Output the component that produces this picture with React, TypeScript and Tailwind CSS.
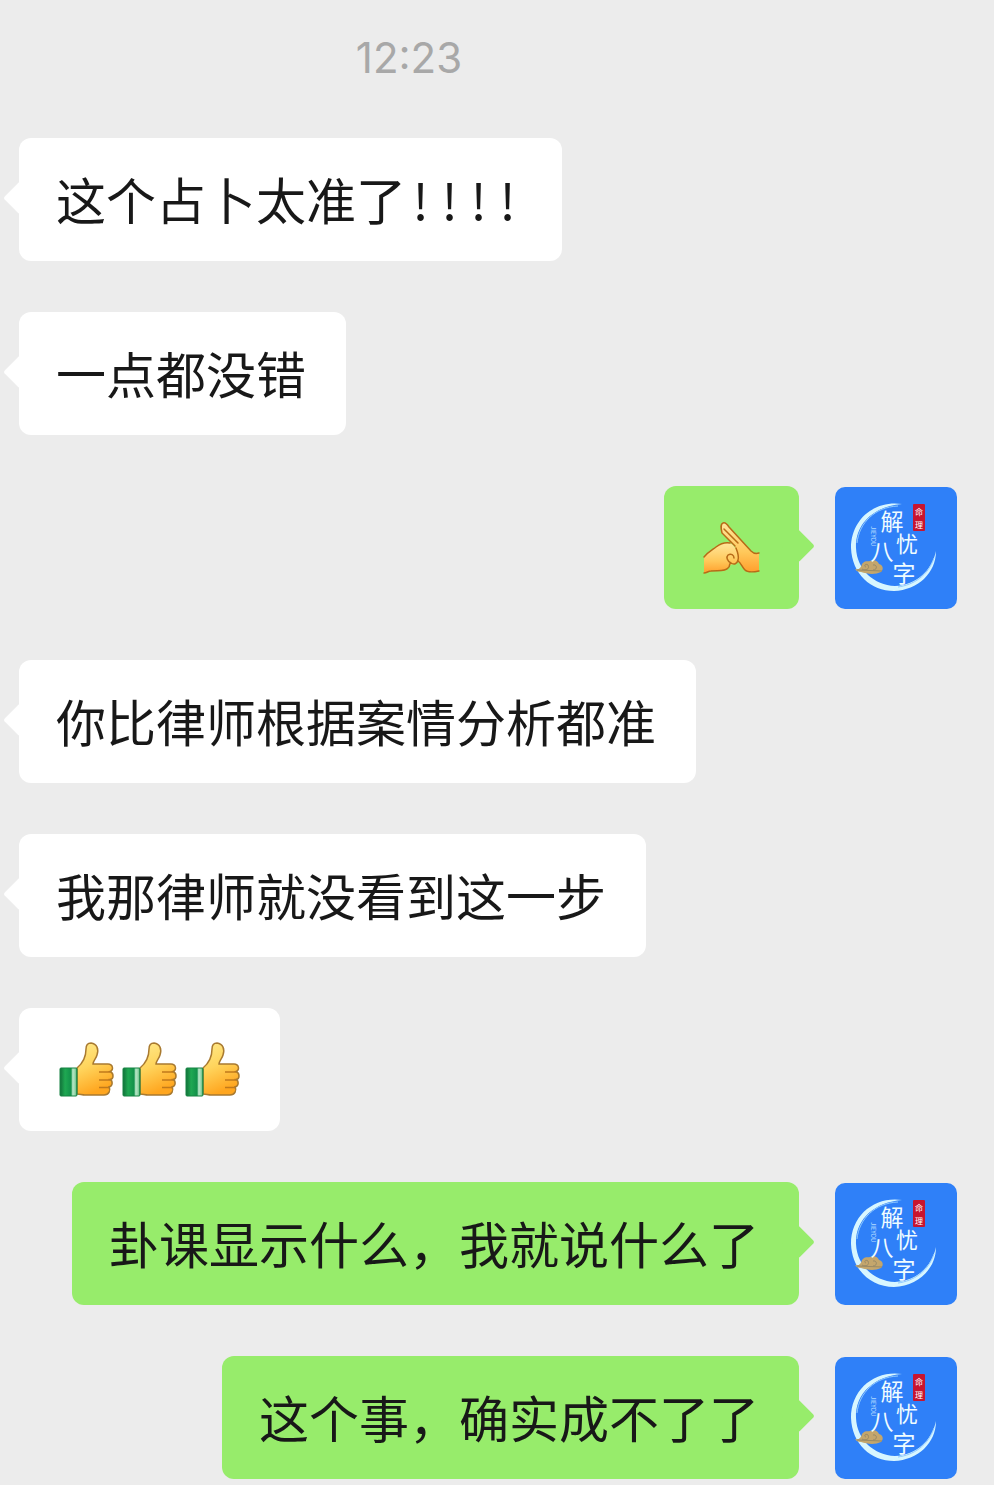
import type { ReactNode } from "react"

type Message = {
  id: number
  mine?: boolean
  content: ReactNode
  emoji?: boolean
}

function ThumbsUp() {
  return (
    <svg viewBox="0 0 63 56" className="h-14 w-[63px]" role="img" aria-label="赞">
      <defs>
        <linearGradient id="thumb-skin" x1="0" y1="0" x2="0.3" y2="1">
          <stop offset="0" stopColor="#ffe98a" />
          <stop offset="0.5" stopColor="#ffd45c" />
          <stop offset="1" stopColor="#ffa61f" />
        </linearGradient>
        <linearGradient id="thumb-cuff">
          <stop offset="0" stopColor="#12703a" />
          <stop offset="0.3" stopColor="#1fa852" />
          <stop offset="0.65" stopColor="#12914a" />
          <stop offset="0.75" stopColor="#b9e8c8" />
          <stop offset="0.9" stopColor="#8fd3a5" />
          <stop offset="1" stopColor="#1b9148" />
        </linearGradient>
      </defs>
      <path
        d="M22 26C28 21 31 15 31 7C31 2 33 1 36 1C42 2 44 7 42 13C41 17 38 19 38 22H53C58 22 59 28 55 29.500C59 31 59 37 55 37.500C58 39 58 44 54 45C56 48 54 53 49 53H30C27 53 25 52 22 52Z"
        fill="url(#thumb-skin)"
        stroke="#a97a30"
        strokeWidth="1.500"
      />
      <path d="M44 30H55M44 38H55M44 45.500H54" fill="none" stroke="#c17a1b" strokeWidth="1.500" />
      <rect x="5" y="26" width="17" height="28" rx="1" fill="url(#thumb-cuff)" stroke="#178343" />
    </svg>
  )
}

function FoldedFists() {
  return (
    <svg viewBox="0 0 63 56" className="h-14 w-[63px]" role="img" aria-label="抱拳">
      <defs>
        <linearGradient id="fist-skin" x1="0" y1="0" x2="0" y2="1">
          <stop offset="0" stopColor="#ffe79c" />
          <stop offset="0.6" stopColor="#ffc85a" />
          <stop offset="1" stopColor="#ff9f2d" />
        </linearGradient>
      </defs>
      <path
        d="M59 33C56 34 53 33 51 31L29 7C27 4 25 2 23 3C20 4 21 8 22 13L29 20L35 26L38 42C41 43 42 47 45 50C48 53 54 52 59 51Z"
        fill="url(#fist-skin)"
      />
      <path
        d="M59 33C56 34 53 33 51 31L29 7C27 4 25 2 23 3C20 4 21 8 22 13L29 20L35 26M24 9L38 23M59 51C54 52 48 53 45 50C42 47 41 43 38 41"
        fill="none"
        stroke="#b86b17"
        strokeWidth="1.500"
        strokeLinecap="round"
      />
      <path
        d="M4 37C8 32 12 30 16 27C20 24 25 22 30 23C34 25 37 30 38 36C39 41 37 44 34 44C31 44 30 45 29 46C27 50 24 51 21 51C17 51 14 50 11 51C8 51 7 53 4 53Z"
        fill="url(#fist-skin)"
      />
      <path
        d="M4 37C8 32 12 30 16 27C20 24 25 22 30 23M36 28C38 33 39 37 38 40C37 44 34 45 31 43C27 41 26 37 28 35C31 33 34 35 34 38M31 43C28 44 31 46 28 48C25 52 17 50 11 51C8 51 7 53 4 53"
        fill="none"
        stroke="#b86b17"
        strokeWidth="1.500"
        strokeLinecap="round"
      />
    </svg>
  )
}

function Avatar() {
  return (
    <svg
      viewBox="0 0 122 122"
      className="size-[122px] shrink-0 rounded-[10px] bg-[#2f80f8] font-['Noto_Sans_CJK_SC',sans-serif]"
      role="img"
      aria-label="解忧八字"
    >
      {/* Brush ring */}
      <path
        d="M67 17C40 13 16 32 16 61C17 87 36 104 59 104C83 103 101 86 101 64C97 83 82 98 60 99C39 98 22 83 21 61C20 36 40 19 67 17Z"
        fill="#d8f6ff"
      />
      <path d="M63 19C40 20 24 36 22 56M99 71C93 89 78 98 63 100" fill="none" stroke="#8fc9ff" />
      {/* Cloud */}
      <path
        d="M20 82C24 83 26 81 27 77C30 73 33 75 35 74C39 72 43 74 44 77C48 78 49 82 46 85C40 88 32 87 26 85C23 85 21 84 20 82Z"
        fill="#c4a66c"
      />
      <path
        d="M27 82C31 84 35 82 33 78C31 76 28 79 31 80M38 83C43 83 42 77 38 78M22 83L47 84"
        fill="none"
        stroke="#998a66"
      />
      <rect x="78" y="17" width="12" height="27" rx="1" fill="#c8142f" />
      <g fill="#fff" textAnchor="middle">
        <text x="84" y="28" fontSize="8">命</text>
        <text x="84" y="41" fontSize="8">理</text>
      </g>
      <g fill="#effcff" textAnchor="middle">
        <text x="57" y="43" fontSize="23">解</text>
        <text x="72" y="65" fontSize="22">忧</text>
        <text x="47" y="73" fontSize="23">八</text>
        <text x="69" y="95" fontSize="23">字</text>
      </g>
      <text transform="translate(36 39) rotate(90)" fontSize="6" fill="#b5dcff">JIEYOU</text>
    </svg>
  )
}

function Exclamations() {
  return (
    <span className="inline-flex">
      {[0, 1, 2, 3].map((i) => (
        <span key={i} className="w-[29px] text-center">!</span>
      ))}
    </span>
  )
}

const messages: Message[] = [
  { id: 1, content: <>这个占卜太准了<Exclamations /></> },
  { id: 2, content: "一点都没错" },
  { id: 3, mine: true, emoji: true, content: <FoldedFists /> },
  { id: 4, content: "你比律师根据案情分析都准" },
  { id: 5, content: "我那律师就没看到这一步" },
  { id: 6, emoji: true, content: <><ThumbsUp /><ThumbsUp /><ThumbsUp /></> },
  { id: 7, mine: true, content: "卦课显示什么，我就说什么了" },
  { id: 8, mine: true, content: "这个事，确实成不了了" },
]

function Bubble({ mine, emoji, content }: Message) {
  return (
    <div
      className={`relative flex min-h-[123px] items-center rounded-[12px] ${
        mine ? "bg-[#97ec6b]" : "bg-white"
      } ${emoji ? "px-9" : "pr-10 pb-1 pl-[37px]"}`}
    >
      {/* Tail */}
      <span
        className={`absolute top-12 size-6 rotate-45 rounded-[3px] ${
          mine ? "-right-[11px] bg-[#97ec6b]" : "-left-[11px] bg-white"
        }`}
      />
      <div className="relative flex items-center">{content}</div>
    </div>
  )
}

export default function App() {
  return (
    <main className="min-h-screen w-full bg-[#ececec] pb-1.5 font-['Noto_Sans_CJK_SC',sans-serif] text-[50px] leading-[60px] text-[#181818]">
      <div className="flex h-[138px] justify-center pt-8 pr-44">
        <time className="font-['Inter',sans-serif] text-[42px] leading-[52px] text-[#a8a8a8]">12:23</time>
      </div>

      <ul className="flex flex-col gap-[51px]">
        {messages.map((message) => (
          <li
            key={message.id}
            className={`flex items-center pr-[37px] pl-[19px] ${
              message.mine ? "justify-end gap-9" : "justify-start"
            }`}
          >
            <Bubble {...message} />
            {message.mine && <Avatar />}
          </li>
        ))}
      </ul>
    </main>
  )
}
